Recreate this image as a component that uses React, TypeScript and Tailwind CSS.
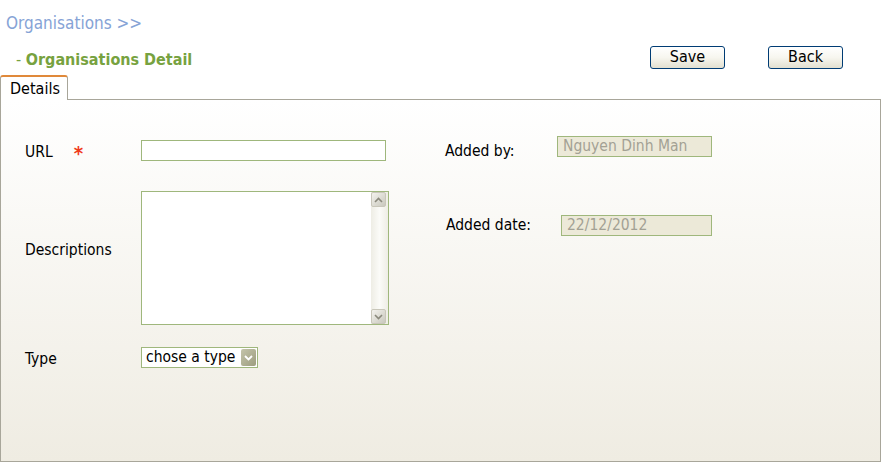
import React from 'react';

const font = { fontFamily: 'Tahoma, "DejaVu Sans", sans-serif' };

function XpButton({ label }: { label: string }) {
  return (
    <button className="w-[75px] h-[23px] rounded-[3px] border border-[#003c74] bg-gradient-to-b from-white via-[#f7f6ef] to-[#e3e0d0] text-[16px] leading-none text-black [font-stretch:condensed]">
      {label}
    </button>
  );
}

function ScrollBtn({ down }: { down?: boolean }) {
  return (
    <div className="w-[15px] h-[15px] rounded-[2px] border border-[#c9c7ba] bg-gradient-to-br from-[#f4f3ee] to-[#c9c8bd] flex items-center justify-center">
      <svg width="9" height="6" viewBox="0 0 9 6">
        <path d={down ? 'M1 1 L4.5 4.5 L8 1' : 'M1 5 L4.5 1.5 L8 5'} stroke="#8a897c" strokeWidth="1.6" fill="none" />
      </svg>
    </div>
  );
}

export default function App() {
  return (
    <div className="w-[882px] h-[465px] bg-white text-[15.5px] text-black [font-stretch:condensed]" style={font}>
      <div className="pl-[6px] pt-[11px] h-[34px] text-[17px] text-[#86a3d6]">Organisations &gt;&gt;</div>

      <div className="flex items-center h-[24px] mt-[11px]">
        <div className="pl-[16px] pt-[5px] text-[16px] font-bold text-[#77a23f] w-[650px]">
          <span className="font-normal">- </span>Organisations Detail
        </div>
        <XpButton label="Save" />
        <div className="w-[43px]" />
        <XpButton label="Back" />
      </div>

      <div className="flex mt-[6px] h-[25px]">
        <div className="w-[68px] h-[25px] border border-b-0 border-[#a8a69a] border-t-2 border-t-[#e0893a] rounded-t-[3px] bg-white pl-[9px] text-[16px] leading-[23px] relative z-10">
          Details
        </div>
      </div>

      <div className="-mt-[1px] w-[881px] h-[363px] border border-[#a8a69a] bg-gradient-to-b from-white to-[#efece2] flex">
        <div className="w-[444px] pl-[24px] pt-[40px]">
          <div className="flex items-center h-[21px]">
            <div className="w-[116px] flex items-center pt-[4px]">
              <span>URL</span>
              <span className="ml-[21px] text-[#f03a1a] text-[20px] leading-none font-bold">*</span>
            </div>
            <div className="w-[245px] h-[21px] border border-[#9fb77c] bg-white" />
          </div>

          <div className="flex items-center mt-[30px]">
            <div className="w-[116px] -mt-[14px]">Descriptions</div>
            <div className="w-[248px] h-[134px] border border-[#9fb77c] bg-white flex">
              <div className="flex-1" />
              <div className="w-[17px] flex flex-col justify-between bg-gradient-to-r from-[#eeede5] via-[#fbfbf8] to-[#eeede5]">
                <ScrollBtn />
                <ScrollBtn down />
              </div>
            </div>
          </div>

          <div className="flex items-center h-[21px] mt-[22px]">
            <div className="w-[116px] pt-[4px]">Type</div>
            <div className="w-[117px] h-[21px] border border-[#9fb77c] bg-white flex items-center justify-between pl-[4px] pr-[1px]">
              <span className="leading-none whitespace-nowrap">chose a type</span>
              <div className="w-[15px] h-[17px] rounded-[2px] bg-gradient-to-br from-[#c4c4aa] to-[#9d9d80] flex items-center justify-center">
                <svg width="9" height="6" viewBox="0 0 9 6">
                  <path d="M1 1 L4.5 4.5 L8 1" stroke="white" strokeWidth="1.8" fill="none" />
                </svg>
              </div>
            </div>
          </div>
        </div>

        <div className="pt-[36px]">
          <div className="flex h-[21px]">
            <div className="w-[112px] pt-[5px] leading-[21px]">Added by:</div>
            <div className="w-[155px] h-[21px] border border-[#9fb77c] bg-[#ece9d8] text-[#a3a194] pl-[5px] leading-[19px]">
              Nguyen Dinh Man
            </div>
          </div>
          <div className="flex h-[21px] mt-[58px]">
            <div className="w-[116px] pl-[1px] leading-[21px]">Added date:</div>
            <div className="w-[151px] h-[21px] border border-[#9fb77c] bg-[#ece9d8] text-[#a3a194] pl-[5px] leading-[19px]">
              22/12/2012
            </div>
          </div>
        </div>
      </div>
    </div>
  );
}
